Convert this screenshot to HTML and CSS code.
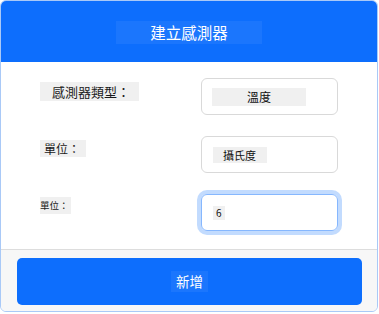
FILE: index.html
```html
<!DOCTYPE html>
<html lang="zh-Hant">
<head>
    <meta charset="UTF-8">
    <meta name="viewport" content="width=device-width, initial-scale=1.0">
    <title>建立感測器</title>
    <link rel="stylesheet" href="styles.css">
</head>
<body>
    <div class="card">
        <div class="card-header">
            <div class="title">建立感測器</div>
        </div>
        <div class="card-body">
            <div class="row">
                <div class="label label-lg">感測器類型：</div>
                <div class="field">
                    <span class="value value-type">溫度</span>
                </div>
            </div>
            <div class="row">
                <div class="label label-md">單位：</div>
                <div class="field">
                    <span class="value value-unit">攝氏度</span>
                </div>
            </div>
            <div class="row">
                <div class="label label-sm">單位：</div>
                <div class="field focused">
                    <span class="value value-num">6</span>
                </div>
            </div>
        </div>
        <div class="card-footer">
            <button class="btn-add"><span>新增</span></button>
        </div>
    </div>
</body>
</html>
```

FILE: styles.css
```css
body {
    margin: 0;
    background: #ffffff;
    font-family: "Noto Sans CJK TC", "Noto Sans", sans-serif;
}
.card {
    width: 376px;
    height: 310px;
    border: 1px solid #a9c9f7;
    border-radius: 6px;
    overflow: hidden;
    display: flex;
    flex-direction: column;
    background: #ffffff;
}
.card-header {
    height: 61px;
    background: #0d6efd;
    display: flex;
    align-items: center;
    justify-content: center;
}
.title {
    height: 23px;
    line-height: 23px;
    padding: 0 34px;
    background: rgba(255, 255, 255, 0.06);
    color: #ffffff;
    font-size: 15.5px;
    margin-top: 1px;
}
.card-body {
    flex: 1;
    padding: 16px 39px 0 39px;
    display: flex;
    flex-direction: column;
    gap: 21px;
    border-bottom: 1px solid #dddddd;
}
.row {
    display: flex;
    justify-content: space-between;
    align-items: flex-start;
}
.label {
    background: #f0f0f0;
    color: #1a1a1a;
    margin-top: 4px;
    white-space: nowrap;
}
.label-lg {
    font-size: 13px;
    height: 19px;
    line-height: 19px;
    padding: 0 9px 0 12px;
}
.label-md {
    font-size: 12px;
    height: 17px;
    line-height: 17px;
    padding: 0 6px 0 4px;
}
.label-sm {
    font-size: 9.5px;
    height: 17px;
    line-height: 17px;
    padding: 0 2px 0 0;
    margin-top: 3px;
}
.field {
    width: 137px;
    height: 37px;
    border: 1px solid #d9d9d9;
    border-radius: 6px;
    display: flex;
    align-items: center;
    padding-left: 10px;
    box-sizing: border-box;
}
.field.focused {
    border-color: #86b7fe;
    box-shadow: 0 0 0 4px rgba(13, 110, 253, 0.25);
}
.value {
    background: #f0f0f0;
    color: #111111;
    white-space: nowrap;
}
.value-type {
    width: 94px;
    height: 18px;
    line-height: 18px;
    font-size: 12px;
    text-align: center;
}
.value-unit {
    height: 16px;
    line-height: 16px;
    font-size: 11px;
    padding: 0 11px 0 10px;
    margin-left: 1px;
}
.value-num {
    height: 14px;
    line-height: 14px;
    font-size: 10px;
    padding: 0 3px;
    margin-left: 1px;
}
.card-footer {
    height: 61px;
    background: #f7f7f7;
    padding: 8px 15px 0 16px;
    box-sizing: border-box;
}
.btn-add {
    width: 100%;
    height: 47px;
    border: none;
    border-radius: 5px;
    background: #0d6efd;
    display: flex;
    align-items: center;
    justify-content: center;
    font-family: inherit;
    padding: 0;
}
.btn-add span {
    background: rgba(255, 255, 255, 0.06);
    color: #ffffff;
    font-size: 13.5px;
    height: 21px;
    line-height: 21px;
    padding: 0 5px;
}
```
